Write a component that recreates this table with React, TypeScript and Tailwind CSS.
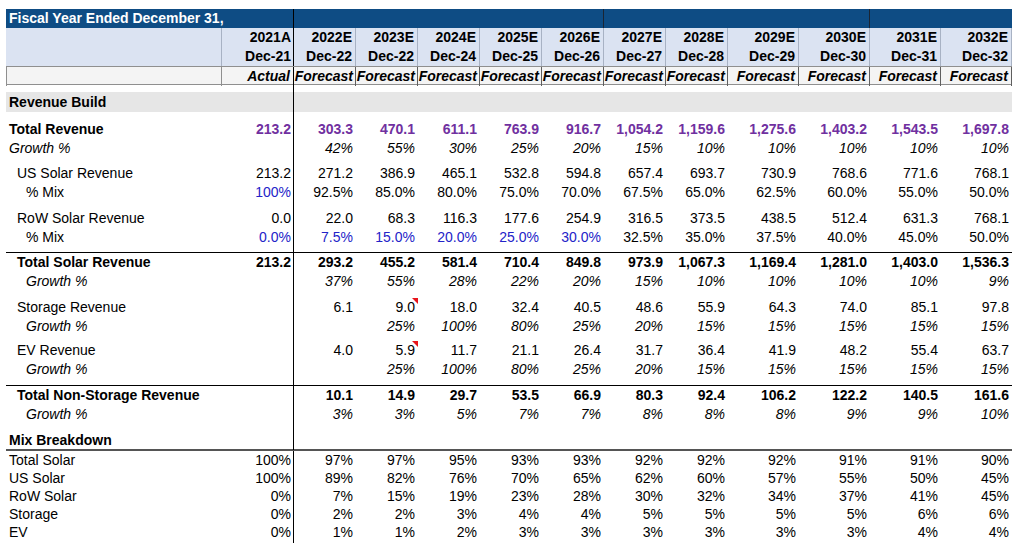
import React from "react";
import clsx from "clsx";

const COLS = "grid grid-cols-[216px_72px_repeat(7,62px)_repeat(4,71px)]";

const YEARS = ["2021A", "2022E", "2023E", "2024E", "2025E", "2026E", "2027E", "2028E", "2029E", "2030E", "2031E", "2032E"];
const DATES = ["Dec-21", "Dec-22", "Dec-22", "Dec-24", "Dec-25", "Dec-26", "Dec-27", "Dec-28", "Dec-29", "Dec-30", "Dec-31", "Dec-32"];

const indentClass = ["pl-[3px]", "pl-[11px]", "pl-[20px]"];

type RowProps = {
    label: string;
    values?: string[];
    indent?: number;
    labelClass?: string;
    valueClass?: string;
    blueUpTo?: number;
    flags?: number[];
    h?: string;
    className?: string;
};

function DataRow({ label, values = [], indent = 0, labelClass, valueClass, blueUpTo = -1, flags = [], h = "h-[19px]", className }: RowProps) {
    return (
        <div className={clsx(COLS, h, className)}>
            <div className={clsx("flex items-center whitespace-nowrap", indentClass[indent], labelClass)}>{label}</div>
            {Array.from({ length: 12 }).map((_, i) => (
                <div
                    key={i}
                    className={clsx(
                        "relative flex items-center justify-end whitespace-nowrap",
                        i === 0 ? "border-r border-black pr-[2px]" : "pr-[3px]",
                        valueClass,
                        i <= blueUpTo && "text-[#2323c8]"
                    )}
                >
                    {values[i] ?? ""}
                    {flags.includes(i) && (
                        <span className="absolute right-0 top-0 h-0 w-0 border-l-[6px] border-t-[6px] border-l-transparent border-t-[#e8141b]" />
                    )}
                </div>
            ))}
        </div>
    );
}

function Spacer({ h }: { h: string }) {
    return <DataRow label="" h={h} />;
}

export default function App() {
    return (
        <div className="min-h-screen bg-white font-['Liberation_Sans',Arial,sans-serif] text-[14px] leading-[19px] text-black">
            <div className="ml-[6px] w-[1006px] pt-[9px]">
                {/* Title bar */}
                <div className={clsx(COLS, "h-[19px] bg-[#0e4c84] text-white")}>
                    <div className="flex items-center overflow-visible whitespace-nowrap pl-[3px] font-bold">Fiscal Year Ended December 31,</div>
                    {YEARS.map((y, i) => (
                        <div
                            key={y}
                            className={clsx(
                                i === 0 && "border-r border-black",
                                (i === 5 || i === 9) && "border-r border-[#1b2533]"
                            )}
                        />
                    ))}
                </div>

                {/* Year / date header */}
                <div className={clsx(COLS, "bg-[#dbe3f2] font-bold")}>
                    <div className="border-r border-[#a8b2c4]" />
                    {YEARS.map((y, i) => (
                        <div
                            key={y}
                            className={clsx(
                                "flex flex-col items-end leading-[19px]",
                                i === 0 ? "border-r border-black pr-[2px]" : "border-r border-[#a8b2c4] pr-[3px]"
                            )}
                        >
                            <span>{y}</span>
                            <span>{DATES[i]}</span>
                        </div>
                    ))}
                </div>

                {/* Actual / Forecast */}
                <div className={clsx(COLS, "h-[19px] border-y border-[#8f8f8f] bg-[#f4f4f4] font-bold italic")}>
                    <div className="border-x border-[#8f8f8f]" />
                    {YEARS.map((y, i) => (
                        <div
                            key={y}
                            className={clsx(
                                "flex items-center justify-end whitespace-nowrap",
                                i === 0 ? "border-r border-black pr-[2px]" : "border-r border-[#5f5f5f]",
                                i > 0 && i < 8 ? "pr-[2px]" : "pr-[3px]"
                            )}
                        >
                            {i === 0 ? "Actual" : "Forecast"}
                        </div>
                    ))}
                </div>

                <Spacer h="h-[7px]" />
                <DataRow label="Revenue Build" labelClass="font-bold" h="h-[20px]" className="bg-[#e6e6e6]" />
                <Spacer h="h-[8px]" />

                <DataRow
                    label="Total Revenue"
                    labelClass="font-bold"
                    valueClass="font-bold text-[#7030a0]"
                    values={["213.2", "303.3", "470.1", "611.1", "763.9", "916.7", "1,054.2", "1,159.6", "1,275.6", "1,403.2", "1,543.5", "1,697.8"]}
                />
                <DataRow
                    label="Growth %"
                    labelClass="italic"
                    valueClass="italic"
                    values={["", "42%", "55%", "30%", "25%", "20%", "15%", "10%", "10%", "10%", "10%", "10%"]}
                />
                <Spacer h="h-[6px]" />
                <DataRow
                    label="US Solar Revenue"
                    indent={1}
                    values={["213.2", "271.2", "386.9", "465.1", "532.8", "594.8", "657.4", "693.7", "730.9", "768.6", "771.6", "768.1"]}
                />
                <DataRow
                    label="% Mix"
                    indent={2}
                    blueUpTo={0}
                    values={["100%", "92.5%", "85.0%", "80.0%", "75.0%", "70.0%", "67.5%", "65.0%", "62.5%", "60.0%", "55.0%", "50.0%"]}
                />
                <Spacer h="h-[7px]" />
                <DataRow
                    label="RoW Solar Revenue"
                    indent={1}
                    values={["0.0", "22.0", "68.3", "116.3", "177.6", "254.9", "316.5", "373.5", "438.5", "512.4", "631.3", "768.1"]}
                />
                <DataRow
                    label="% Mix"
                    indent={2}
                    blueUpTo={5}
                    values={["0.0%", "7.5%", "15.0%", "20.0%", "25.0%", "30.0%", "32.5%", "35.0%", "37.5%", "40.0%", "45.0%", "50.0%"]}
                />
                <Spacer h="h-[5px]" />
                <DataRow
                    label="Total Solar Revenue"
                    indent={1}
                    labelClass="font-bold"
                    valueClass="font-bold"
                    h="h-[20px]"
                    className="border-t border-black"
                    values={["213.2", "293.2", "455.2", "581.4", "710.4", "849.8", "973.9", "1,067.3", "1,169.4", "1,281.0", "1,403.0", "1,536.3"]}
                />
                <DataRow
                    label="Growth %"
                    indent={2}
                    labelClass="italic"
                    valueClass="italic"
                    values={["", "37%", "55%", "28%", "22%", "20%", "15%", "10%", "10%", "10%", "10%", "9%"]}
                />
                <Spacer h="h-[7px]" />
                <DataRow
                    label="Storage Revenue"
                    indent={1}
                    flags={[2]}
                    values={["", "6.1", "9.0", "18.0", "32.4", "40.5", "48.6", "55.9", "64.3", "74.0", "85.1", "97.8"]}
                />
                <DataRow
                    label="Growth %"
                    indent={2}
                    labelClass="italic"
                    valueClass="italic"
                    values={["", "", "25%", "100%", "80%", "25%", "20%", "15%", "15%", "15%", "15%", "15%"]}
                />
                <Spacer h="h-[5px]" />
                <DataRow
                    label="EV Revenue"
                    indent={1}
                    flags={[2]}
                    values={["", "4.0", "5.9", "11.7", "21.1", "26.4", "31.7", "36.4", "41.9", "48.2", "55.4", "63.7"]}
                />
                <DataRow
                    label="Growth %"
                    indent={2}
                    labelClass="italic"
                    valueClass="italic"
                    values={["", "", "25%", "100%", "80%", "25%", "20%", "15%", "15%", "15%", "15%", "15%"]}
                />
                <Spacer h="h-[6px]" />
                <DataRow
                    label="Total Non-Storage Revenue"
                    indent={1}
                    labelClass="font-bold"
                    valueClass="font-bold"
                    h="h-[20px]"
                    className="border-t border-black"
                    values={["", "10.1", "14.9", "29.7", "53.5", "66.9", "80.3", "92.4", "106.2", "122.2", "140.5", "161.6"]}
                />
                <DataRow
                    label="Growth %"
                    indent={2}
                    labelClass="italic"
                    valueClass="italic"
                    values={["", "3%", "3%", "5%", "7%", "7%", "8%", "8%", "8%", "9%", "9%", "10%"]}
                />
                <Spacer h="h-[7px]" />
                <DataRow label="Mix Breakdown" labelClass="font-bold" h="h-[20px]" className="border-b-2 border-[#555555]" />
                <DataRow
                    label="Total Solar"
                    h="h-[18px]"
                    values={["100%", "97%", "97%", "95%", "93%", "93%", "92%", "92%", "92%", "91%", "91%", "90%"]}
                />
                <DataRow
                    label="US Solar"
                    h="h-[18px]"
                    values={["100%", "89%", "82%", "76%", "70%", "65%", "62%", "60%", "57%", "55%", "50%", "45%"]}
                />
                <DataRow
                    label="RoW Solar"
                    h="h-[18px]"
                    values={["0%", "7%", "15%", "19%", "23%", "28%", "30%", "32%", "34%", "37%", "41%", "45%"]}
                />
                <DataRow
                    label="Storage"
                    h="h-[18px]"
                    values={["0%", "2%", "2%", "3%", "4%", "4%", "5%", "5%", "5%", "5%", "6%", "6%"]}
                />
                <DataRow
                    label="EV"
                    h="h-[18px]"
                    values={["0%", "1%", "1%", "2%", "3%", "3%", "3%", "3%", "3%", "3%", "4%", "4%"]}
                />
                <Spacer h="h-[2px]" />
            </div>
        </div>
    );
}
